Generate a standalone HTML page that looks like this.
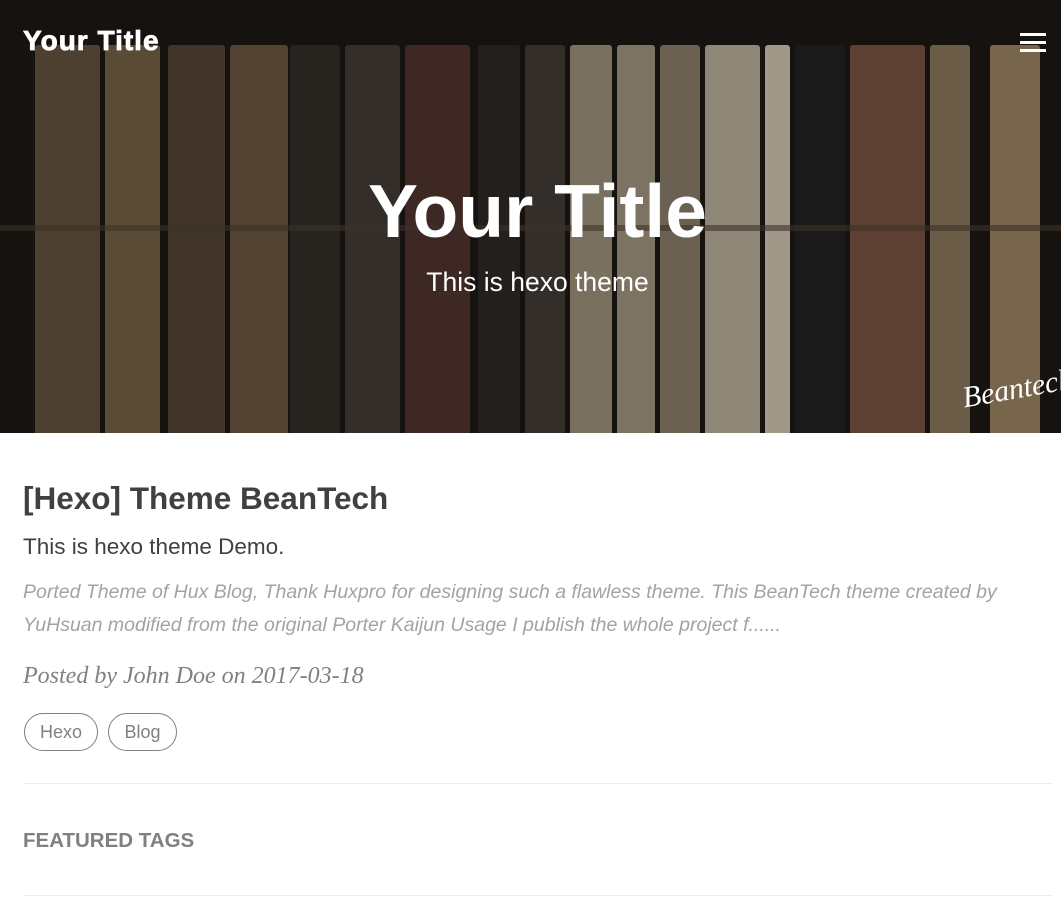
<!DOCTYPE html>
<html><head><style>
body{margin:0;width:1061px;height:909px;overflow:hidden;background:#fff;font-family:"Liberation Sans",sans-serif}
.hero{position:relative;height:433px;background:#15120f;overflow:hidden}
.b{position:absolute;top:45px;bottom:0;border-radius:3px 3px 0 0}
.nav{position:absolute;left:23px;top:25px;color:#fff;font-weight:bold;font-size:28px;letter-spacing:1px;-webkit-text-stroke:0.8px #fff}
.menu{position:absolute;left:1020px;top:33px;width:26px}
.menu i{display:block;height:3px;background:#fff;margin-bottom:5px}
.t{position:absolute;left:0;width:1075px;text-align:center;color:#fff}
</style></head><body>
<div class="hero">
<div class="b" style="left:35px;width:65px;background:#4d4030"></div>
<div class="b" style="left:105px;width:55px;background:#5a4b36"></div>
<div class="b" style="left:168px;width:57px;background:#3f3427"></div>
<div class="b" style="left:230px;width:58px;background:#524231"></div>
<div class="b" style="left:290px;width:50px;background:#27231f"></div>
<div class="b" style="left:345px;width:55px;background:#332e29"></div>
<div class="b" style="left:405px;width:65px;background:#3e2823"></div>
<div class="b" style="left:478px;width:42px;background:#231f1c"></div>
<div class="b" style="left:525px;width:40px;background:#332e29"></div>
<div class="b" style="left:570px;width:42px;background:#7a705f"></div>
<div class="b" style="left:617px;width:38px;background:#7d7362"></div>
<div class="b" style="left:660px;width:40px;background:#6a6152"></div>
<div class="b" style="left:705px;width:55px;background:#8f8777"></div>
<div class="b" style="left:765px;width:25px;background:#a09888"></div>
<div class="b" style="left:795px;width:50px;background:#1a1a1a"></div>
<div class="b" style="left:850px;width:75px;background:#5e4032"></div>
<div class="b" style="left:930px;width:40px;background:#6a5c47"></div>
<div class="b" style="left:990px;width:50px;background:#77654c"></div>
<div style="position:absolute;left:0;right:0;top:225px;height:6px;background:rgba(60,50,40,.6)"></div>
<div class="nav">Your Title</div>
<div class="menu"><i></i><i></i><i></i></div>
<div class="t" style="top:168px;font-size:75px;font-weight:bold">Your Title</div>
<div class="t" style="top:267px;font-size:26.5px">This is hexo theme</div>
<div style="position:absolute;left:962px;top:372px;color:#fff;font-family:'Liberation Serif',serif;font-style:italic;font-size:30px;transform:rotate(-10deg)">Beantech</div>
</div>
<div style="padding:0 23px">
<div style="margin-top:47px;font-size:31.5px;font-weight:bold;color:#404040">[Hexo] Theme BeanTech</div>
<div style="margin-top:17px;font-size:22.5px;color:#404040">This is hexo theme Demo.</div>
<div style="margin-top:16px;font-size:19.5px;font-style:italic;color:#a3a3a3;line-height:33px">Ported Theme of Hux Blog, Thank Huxpro for designing such a flawless theme. This BeanTech theme created by YuHsuan modified from the original Porter Kaijun Usage I publish the whole project f......</div>
<div style="margin-top:21px;font-family:'Liberation Serif',serif;font-style:italic;font-size:24px;color:#808080">Posted by John Doe on 2017-03-18</div>
<div style="margin-top:23px;height:38px">
<span style="display:inline-block;box-sizing:border-box;height:38px;line-height:36px;padding:0 15px;border:1px solid #808080;border-radius:19px;color:#808080;font-size:18px;margin-left:1px">Hexo</span>
<span style="display:inline-block;box-sizing:border-box;height:38px;line-height:36px;padding:0 15px;border:1px solid #808080;border-radius:19px;color:#808080;font-size:18px;margin-left:6px">Blog</span>
</div>
<div style="margin-top:32px;border-top:1px solid #eee;width:1030px"></div>
<div style="margin-top:45px;font-size:20.5px;font-weight:bold;color:#808080">FEATURED TAGS</div>
<div style="margin-top:42px;border-top:1px solid #eee;width:1030px"></div>
</div>
</body></html>
